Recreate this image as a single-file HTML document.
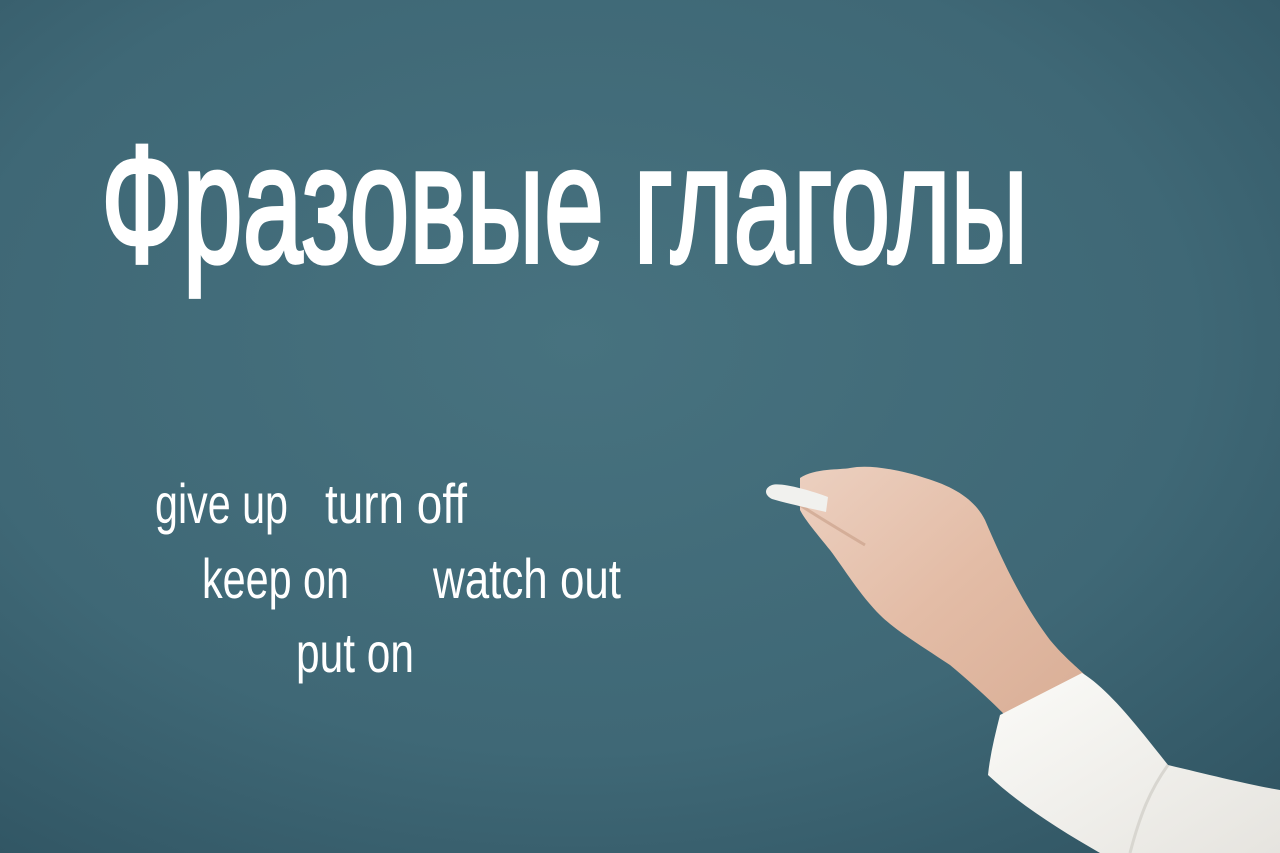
<!DOCTYPE html>
<html><head><meta charset="utf-8"><style>
html,body{margin:0;padding:0;width:1280px;height:853px;overflow:hidden;background:#3e6673}
svg{display:block}
</style></head><body>
<svg width="1280" height="853" viewBox="0 0 1280 853" xmlns="http://www.w3.org/2000/svg">
<defs>
<radialGradient id="bg" cx="45%" cy="40%" r="80%">
<stop offset="0" stop-color="#47727f"/>
<stop offset="0.6" stop-color="#3f6876"/>
<stop offset="1" stop-color="#2f5361"/>
</radialGradient>
<linearGradient id="skin" x1="0" y1="0" x2="1" y2="1">
<stop offset="0" stop-color="#ecd0c0"/>
<stop offset="0.5" stop-color="#e3bca6"/>
<stop offset="1" stop-color="#d9ae96"/>
</linearGradient>
<linearGradient id="cuff" x1="0" y1="0" x2="1" y2="1">
<stop offset="0" stop-color="#fbfbf8"/>
<stop offset="1" stop-color="#e6e4df"/>
</linearGradient>
</defs>
<rect width="1280" height="853" fill="url(#bg)"/>
<g fill="#fff" font-family="'Liberation Sans Narrow','Liberation Sans',sans-serif">
<text x="101" y="262" font-size="168" stroke="#fff" stroke-width="4" textLength="927" lengthAdjust="spacingAndGlyphs">Фразовые глаголы</text>
<g font-size="56">
<text x="155" y="523" textLength="133" lengthAdjust="spacingAndGlyphs">give up</text>
<text x="325" y="523" textLength="142" lengthAdjust="spacingAndGlyphs">turn off</text>
<text x="202" y="598" textLength="147" lengthAdjust="spacingAndGlyphs">keep on</text>
<text x="433" y="598" textLength="188" lengthAdjust="spacingAndGlyphs">watch out</text>
<text x="296" y="672" textLength="118" lengthAdjust="spacingAndGlyphs">put on</text>
</g>
</g>
<!-- hand -->
<path d="M800,478 C815,468 840,470 850,468 C870,464 900,470 925,478 C955,487 975,500 985,520 C1000,555 1020,600 1050,640 C1065,658 1078,668 1085,675 L1010,720 C1000,710 980,690 950,665 C920,645 895,630 880,615 C860,595 845,570 830,550 C818,535 805,520 800,510 Z" fill="url(#skin)"/>
<path d="M800,505 C815,515 840,530 865,545" stroke="#c79d86" stroke-width="3" fill="none" opacity="0.6"/>
<!-- chalk -->
<path d="M772,485 C780,482 810,490 828,497 L826,512 C808,508 785,503 772,499 C764,495 764,488 772,485 Z" fill="#f1f1ee"/>
<!-- cuff -->
<path d="M1000,715 L1082,673 C1110,690 1140,730 1168,765 C1210,775 1250,785 1280,790 L1280,853 L1100,853 C1060,830 1020,805 988,775 C990,755 995,735 1000,715 Z" fill="url(#cuff)"/>
<path d="M1168,765 C1150,790 1140,815 1130,853" stroke="#d8d6d0" stroke-width="3" fill="none"/>
</svg>
</body></html>
